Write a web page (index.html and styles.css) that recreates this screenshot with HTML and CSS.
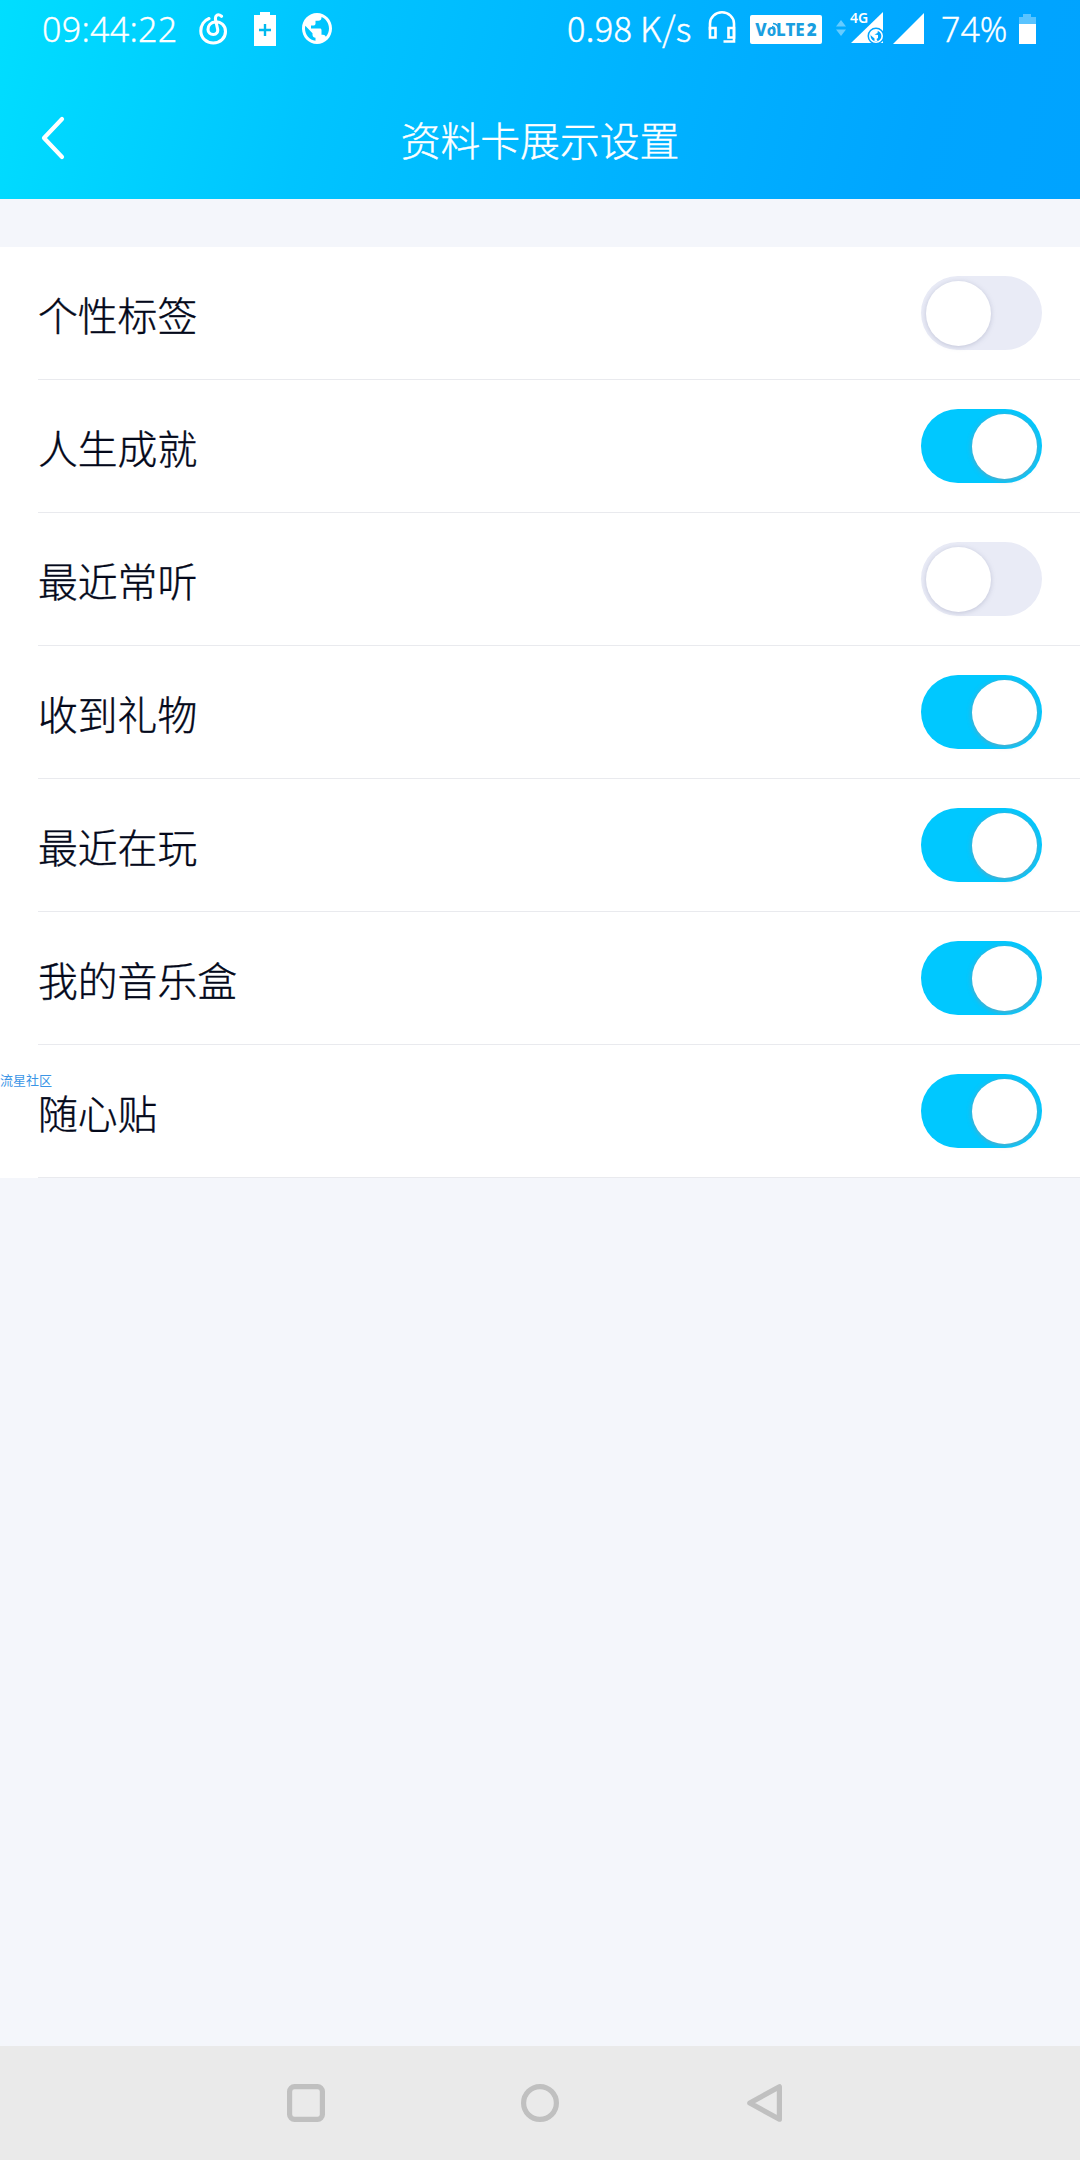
FILE: index.html
```
<!DOCTYPE html>
<html lang="zh-CN">
<head>
  <meta charset="UTF-8"/>
  <meta name="viewport" content="width=device-width, initial-scale=1.0"/>
  <title>资料卡展示设置</title>
  <link rel="stylesheet" href="styles.css">
</head>
<body>
<header class="header">
  <div class="status-bar">
    <div class="status-left">
      <span class="clock">09:44:22</span>
      <svg class="ic-music" width="30" height="34" viewBox="0 0 30 34" fill="none" stroke="#fff" stroke-width="3.100" stroke-linecap="round">
        <path d="M10 5.500C5 7.500 1.800 12.500 1.800 18C1.800 25 7.500 30 14.300 30C21.300 30 26.500 25 26.500 18.500C26.500 12 21.500 8.500 16.500 8.800C11.500 9.500 9 13 9 16.500C9 19.500 11.500 21.500 14.300 21.500C17.500 21.500 19.200 19 18.600 16L16.700 7.500C15.500 2 19 .300 22.500 3.300"/>
      </svg>
      <svg class="ic-saver" width="22" height="34" viewBox="0 0 22 34">
        <path fill="#fff" d="M6 0h10v3h6v31H0V3h6z"/>
        <path fill="#00b9ee" d="M9.800 12h2.400v4.800H17v2.400h-4.800V24H9.800v-4.800H5v-2.400h4.800z"/>
      </svg>
      <svg class="ic-globe" width="30" height="31" viewBox="2 2 20 20" preserveAspectRatio="none">
        <path fill="#fff" d="M12 2C6.480 2 2 6.480 2 12s4.480 10 10 10 10-4.480 10-10S17.520 2 12 2zm-1 17.930c-3.950-.490-7-3.850-7-7.930 0-.620.080-1.210.210-1.790L9 15v1c0 1.100.900 2 2 2v1.930zm6.900-2.540c-.260-.810-1-1.390-1.900-1.390h-1v-3c0-.550-.450-1-1-1H8v-2h2c.550 0 1-.450 1-1V7h2c1.100 0 2-.900 2-2v-.410c2.930 1.190 5 4.060 5 7.410 0 2.080-.800 3.970-2.100 5.390z"/>
      </svg>
    </div>
    <div class="status-right">
      <span class="speed">0.98 K/s</span>
      <svg class="ic-headset" width="28" height="33" viewBox="0 0 28 33" fill="none" stroke="#fff" stroke-width="2.600">
        <path d="M2 19V12.500a12 11.200 0 0 1 24 0V30.500H15.500"/>
        <path d="M2 17h5.500v9.500H2zM20.500 17H26v9.500h-5.500z"/>
      </svg>
      <span class="volte">V<i>o</i>LTE<b>2</b>
        <svg class="volte-wave" width="9" height="8" viewBox="0 0 9 8" fill="none" stroke="#1a9fe0" stroke-width="1.300"><path d="M1 4.500a3.500 3.500 0 0 1 3 3M2 1.500a6 6 0 0 1 5.500 5.500"/></svg>
      </span>
      <svg class="ic-updown" width="10" height="16" viewBox="0 0 10 16" fill="#fff" fill-opacity=".4">
        <path d="M0 6.500L5 0l5 6.500zM0 9.500h10L5 16z"/>
      </svg>
      <span class="signal-data">
        <svg width="34" height="34" viewBox="0 0 34 34">
          <path fill="#fff" d="M33 1v31H1z"/>
          <circle cx="26" cy="25" r="8.500" fill="#00a5ff"/>
          <circle cx="26" cy="25" r="6.200" fill="none" stroke="#fff" stroke-width="1.600"/>
          <path fill="#fff" d="M20.500 22l4-3h3.500l-.5 3-3 1.500 3.500.5v3l-1.500 1 1 2-3 .5v-3l-3.500-3z"/>
        </svg>
        <em>4G</em>
      </span>
      <svg class="ic-signal" width="31" height="31" viewBox="0 0 31 31"><path fill="#fff" d="M31 0v31H0z"/></svg>
      <span class="percent">74%</span>
      <svg class="ic-battery" width="17" height="30" viewBox="0 0 17 30">
        <path fill="#fff" fill-opacity=".35" d="M4 0h8v3h5v7H0V3h4z"/>
        <path fill="#fff" d="M0 10h17v20H0z"/>
      </svg>
    </div>
  </div>
  <div class="title-bar">
    <svg class="back" width="24" height="44" viewBox="0 0 24 44" fill="none" stroke="#fff" stroke-width="4.200" stroke-linecap="round" stroke-linejoin="round">
      <path d="M21 3L3 22l18 19"/>
    </svg>
    <h1>资料卡展示设置</h1>
  </div>
</header>

<main class="list">
  <div class="row"><span>个性标签</span><div class="switch"></div></div>
  <div class="row"><span>人生成就</span><div class="switch on"></div></div>
  <div class="row"><span>最近常听</span><div class="switch"></div></div>
  <div class="row"><span>收到礼物</span><div class="switch on"></div></div>
  <div class="row"><span>最近在玩</span><div class="switch on"></div></div>
  <div class="row"><span>我的音乐盒</span><div class="switch on"></div></div>
  <div class="row"><span>随心贴</span><div class="switch on"></div></div>
  <div class="watermark">流星社区</div>
</main>

<nav class="nav-bar">
  <svg width="38" height="38" viewBox="0 0 38 38" fill="none" stroke="#c0c0c0" stroke-width="5.200"><rect x="2.600" y="2.600" width="32.800" height="32.800" rx="5"/></svg>
  <svg class="home" width="38" height="38" viewBox="0 0 38 38" fill="none" stroke="#c0c0c0" stroke-width="5.200"><circle cx="19" cy="19" r="16.400"/></svg>
  <svg width="35" height="38" viewBox="0 0 35 38" fill="none" stroke="#c0c0c0" stroke-width="5.200" stroke-linejoin="round"><path d="M32.400 2.800v32.400L2.800 19z"/></svg>
</nav>
</body>
</html>
```
FILE: styles.css
```
* { box-sizing: border-box; margin:0; padding:0; }
body { width:1080px; height:2160px; display:flex; flex-direction:column; overflow:hidden; background:#f4f6fb; font-family:"Noto Sans CJK SC", sans-serif; font-weight:300; }
svg { display:block; flex:none; }

.header { height:199px; flex:none; color:#fff; background:linear-gradient(105deg, #00deff 0%, #00c4ff 30%, #00b3ff 58%, #00a5ff 85%, #00a3ff 100%); }
.status-bar { height:60px; padding:0 44px 0 42px; display:flex; justify-content:space-between; font-family:"Noto Sans", sans-serif; font-size:34px; line-height:59px; white-space:nowrap; }
.status-left, .status-right { display:flex; align-items:flex-start; }
.clock { width:157px; letter-spacing:.3px; -webkit-text-stroke:.3px #fff; }
.ic-music { margin-top:13px; }
.ic-saver { margin:12px 0 0 25px; }
.ic-globe { margin:13px 0 0 26px; }
.speed { width:141px; font-family:"Noto Sans CJK SC", sans-serif; font-size:34.500px; line-height:55px; letter-spacing:.3px; -webkit-text-stroke:.4px #fff; }
.ic-headset { margin-top:11px; }
.volte { position:relative; width:72px; height:29px; margin:15px 0 0 14px; border-radius:2px; background:#fff; color:#1a9fe0; font-family:"Noto Sans", sans-serif; font-weight:800; font-size:17px; line-height:30px; text-align:center; }
.volte i { font-style:normal; font-size:15px; }
.volte b { margin-left:2px; }
.volte-wave { position:absolute; left:21px; top:7px; }
.ic-updown { margin:20px 0 0 14px; }
.signal-data { position:relative; margin:11px 0 0 4px; }
.signal-data em { position:absolute; left:0; top:0; font-family:"Noto Sans", sans-serif; font-style:normal; font-weight:600; font-size:14px; line-height:13px; }
.ic-signal { margin:13px 0 0 9px; }
.percent { width:78px; margin-left:17px; -webkit-text-stroke:.3px #fff; }
.ic-battery { margin-top:14px; }

.title-bar { height:139px; padding-top:19px; display:grid; grid-template-columns:100px 1fr 100px; align-items:center; }
.back { margin:-2px 0 0 41px; }
.title-bar h1 { font-size:39.800px; font-weight:300; line-height:60px; text-align:center; -webkit-text-stroke:.4px #fff; }

.list { position:relative; margin-top:48px; background:#fff; }
.row { height:133px; margin-left:38px; padding-right:38px; display:flex; align-items:center; justify-content:space-between; border-bottom:1px solid #e9eaee; font-size:39.800px; color:#03081a; -webkit-text-stroke:.4px #03081a; }
.switch { width:121px; height:74px; padding:5px; display:flex; border-radius:37px; background:#e9ebf6; }
.switch::before { content:""; width:65px; height:65px; border-radius:50%; background:#fff; box-shadow:0 1px 5px rgba(120,125,160,.35); }
.switch.on { justify-content:flex-end; background:#00c8ff; }
.switch.on::before { box-shadow:0 1px 5px rgba(140,150,160,.75); }
.watermark { position:absolute; left:0; top:824px; font-size:13px; font-weight:400; line-height:18px; color:#3b95e6; }

.nav-bar { height:114px; margin-top:auto; padding:0 298px 0 287px; display:flex; align-items:center; justify-content:space-between; background:#eaeaea; }
.home { margin-left:8px; }
```
